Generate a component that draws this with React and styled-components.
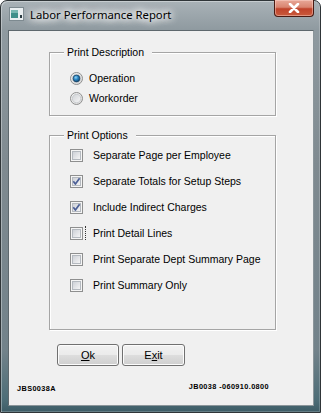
import React from "react";
import styled, { createGlobalStyle } from "styled-components";

const GlobalStyle = createGlobalStyle`
  html, body {
    margin: 0;
    padding: 0;
    background: #ffffff;
  }
  body {
    width: 321px;
    height: 413px;
    overflow: hidden;
  }
`;

const Window = styled.div`
  width: 321px;
  height: 413px;
  box-sizing: border-box;
  display: flex;
  flex-direction: column;
  padding: 0 6px 6px 7px;
  border: 1px solid #2f3538;
  border-radius: 7px 7px 0 0;
  background: linear-gradient(
    to bottom,
    #a9b2b7 0%,
    #8f9aa0 7%,
    #7f8a90 40%,
    #72828a 85%,
    #4d6d77 97%,
    #3d5c66 100%
  );
  box-shadow: inset 1px 1px 0 rgba(255, 255, 255, 0.35),
    inset -1px -1px 0 rgba(255, 255, 255, 0.2);
`;

const TitleBar = styled.div`
  height: 29px;
  flex-shrink: 0;
  display: flex;
  align-items: flex-start;
`;

const TitleIcon = styled.svg`
  margin: 6px 0 0 1px;
  flex-shrink: 0;
`;

const TitleText = styled.div`
  margin: 6px 0 0 6px;
  flex-grow: 1;
  font-family: "Noto Sans", "Open Sans", sans-serif;
  font-size: 11.3px;
  line-height: 16px;
  color: #000;
  text-shadow: 0 0 6px #fff, 0 0 8px #fff, 0 0 10px #fff, 0 0 12px #fff;
`;

const CloseButton = styled.div`
  width: 40px;
  height: 17px;
  margin: -1px 0 0 0;
  box-sizing: border-box;
  display: flex;
  align-items: center;
  justify-content: center;
  border: 1px solid #4a1a12;
  border-top: none;
  border-radius: 0 0 4px 4px;
  background: linear-gradient(
    to bottom,
    #e8a898 0%,
    #d98470 45%,
    #c0432b 55%,
    #c95a3c 100%
  );
  box-shadow: inset 0 0 0 1px rgba(255, 220, 210, 0.45);
`;

const Client = styled.div`
  flex-grow: 1;
  display: flex;
  flex-direction: column;
  background: #f0f0f0;
  border: 1px solid #8b959a;
  border-top-color: #5e686d;
  border-left-color: #5e686d;
  font-family: "Liberation Sans", Arial, sans-serif;
  font-size: 10.5px;
  color: #000;
`;

const Group = styled.fieldset`
  margin: ${({ $top }) => $top}px 0 0 40px;
  width: 227px;
  box-sizing: border-box;
  padding: ${({ $pad }) => $pad};
  border: 1px solid #a5a5a5;
  border-radius: 0;
  box-shadow: inset 1px 1px 0 #fff, 1px 1px 0 #fff;
  display: flex;
  flex-direction: column;
`;

const Legend = styled.legend`
  margin-left: 14px;
  padding: 0 8px 0 3px;
  line-height: 13px;
  background: #f0f0f0;
`;

const OptionRow = styled.div`
  height: ${({ $h }) => $h}px;
  display: flex;
  align-items: center;
  padding-left: 20px;
`;

const OptionLabel = styled.span`
  margin-left: ${({ $gap }) => $gap}px;
  line-height: 13px;
  white-space: nowrap;
`;

const FocusLabel = styled(OptionLabel)`
  margin-left: 2px;
  padding-left: 7px;
  border-left: 1px dotted #333;
  line-height: 14px;
`;

const ButtonRow = styled.div`
  display: flex;
  gap: 3px;
  margin: 14px 0 0 48px;
`;

const Button = styled.div`
  width: ${({ $w }) => $w}px;
  height: 22px;
  box-sizing: border-box;
  display: flex;
  align-items: center;
  justify-content: center;
  border: 1px solid #707070;
  border-radius: 3px;
  background: linear-gradient(
    to bottom,
    #f2f2f2 0%,
    #ebebeb 48%,
    #dddddd 52%,
    #cfcfcf 100%
  );
  box-shadow: inset 0 0 0 1px #fcfcfc;
  font-size: 11px;
`;

const Hotkey = styled.span`
  text-decoration: underline;
`;

const Footer = styled.div`
  display: flex;
  align-items: flex-start;
  justify-content: space-between;
  margin: 16px 44px 0 8px;
  font-weight: bold;
  font-size: 7.3px;
  letter-spacing: 0.4px;
`;

const FooterCode = styled.span`
  margin-top: ${({ $offset }) => $offset}px;
`;

const Radio = ({ checked }) => (
  <svg width="13" height="13" viewBox="0 0 13 13">
    <defs>
      <linearGradient id="rOuter" x1="0" y1="0" x2="1" y2="1">
        <stop offset="0" stopColor="#f6f6f6" />
        <stop offset="1" stopColor="#d8d8d8" />
      </linearGradient>
      <linearGradient id="rInner" x1="0" y1="0" x2="1" y2="1">
        <stop offset="0" stopColor="#cfd2d6" />
        <stop offset="1" stopColor="#f7f7f7" />
      </linearGradient>
      <radialGradient id="rDot" cx="0.4" cy="0.35" r="0.7">
        <stop offset="0" stopColor="#8fd3f5" />
        <stop offset="0.45" stopColor="#2a86c4" />
        <stop offset="1" stopColor="#0e3f66" />
      </radialGradient>
    </defs>
    <circle cx="6.5" cy="6.5" r="6" fill="url(#rOuter)" stroke="#8e8f8f" />
    <circle cx="6.5" cy="6.5" r="4.2" fill="url(#rInner)" stroke="#b9bdc2" strokeWidth="0.6" />
    {checked && (
      <circle cx="6.5" cy="6.5" r="3.4" fill="url(#rDot)" stroke="#163f60" strokeWidth="0.7" />
    )}
  </svg>
);

const Check = ({ checked }) => (
  <svg width="13" height="13" viewBox="0 0 13 13">
    <defs>
      <linearGradient id="cInner" x1="0" y1="0" x2="1" y2="1">
        <stop offset="0" stopColor="#cbcfd5" />
        <stop offset="1" stopColor="#f7f7f7" />
      </linearGradient>
    </defs>
    <rect x="0.5" y="0.5" width="12" height="12" fill="#f5f5f5" stroke="#8e8f8f" />
    <rect x="2.5" y="2.5" width="8" height="8" fill="url(#cInner)" stroke="#b4b9bf" />
    {checked && (
      <path
        d="M3.3 6.2 L5.4 9 L9.6 3.2"
        fill="none"
        stroke="#4b5f96"
        strokeWidth="1.7"
        strokeLinejoin="round"
      />
    )}
  </svg>
);

const options = [
  { label: "Separate Page per Employee", checked: false },
  { label: "Separate Totals for Setup Steps", checked: true },
  { label: "Include Indirect Charges", checked: true },
  { label: "Print Detail Lines", checked: false, focused: true },
  { label: "Print Separate Dept Summary Page", checked: false },
  { label: "Print Summary Only", checked: false },
];

export default function App() {
  return (
    <>
      <GlobalStyle />
      <Window>
        <TitleBar>
          <TitleIcon width="15" height="14" viewBox="0 0 15 14">
            <rect x="0.5" y="0.5" width="14" height="13" fill="#e9eef0" stroke="#7d8a90" />
            <rect x="2" y="3" width="7" height="8" fill="#3f8f8a" />
            <rect x="2" y="3" width="7" height="3" fill="#78b7b1" />
            <rect x="11" y="8" width="2" height="3" fill="#2a3a40" />
          </TitleIcon>
          <TitleText>Labor Performance Report</TitleText>
          <CloseButton>
            <svg width="14" height="10" viewBox="0 0 14 10">
              <path
                d="M3 1 L11 9 M11 1 L3 9"
                stroke="#fff"
                strokeWidth="2.6"
                strokeLinecap="round"
              />
            </svg>
          </CloseButton>
        </TitleBar>
        <Client>
          <Group $top={15} $pad="9px 0 7px 0">
            <Legend>Print Description</Legend>
            <OptionRow $h={20}>
              <Radio checked />
              <OptionLabel $gap={6}>Operation</OptionLabel>
            </OptionRow>
            <OptionRow $h={20}>
              <Radio />
              <OptionLabel $gap={6}>Workorder</OptionLabel>
            </OptionRow>
          </Group>
          <Group $top={13} $pad="0 0 31px 0">
            <Legend>Print Options</Legend>
            {options.map((o) => (
              <OptionRow key={o.label} $h={26}>
                <Check checked={o.checked} />
                {o.focused ? (
                  <FocusLabel>{o.label}</FocusLabel>
                ) : (
                  <OptionLabel $gap={10}>{o.label}</OptionLabel>
                )}
              </OptionRow>
            ))}
          </Group>
          <ButtonRow>
            <Button $w={62}>
              <Hotkey>O</Hotkey>k
            </Button>
            <Button $w={63}>
              E<Hotkey>x</Hotkey>it
            </Button>
          </ButtonRow>
          <Footer>
            <FooterCode $offset={2}>JBS0038A</FooterCode>
            <FooterCode $offset={0}>JB0038 -060910.0800</FooterCode>
          </Footer>
        </Client>
      </Window>
    </>
  );
}
